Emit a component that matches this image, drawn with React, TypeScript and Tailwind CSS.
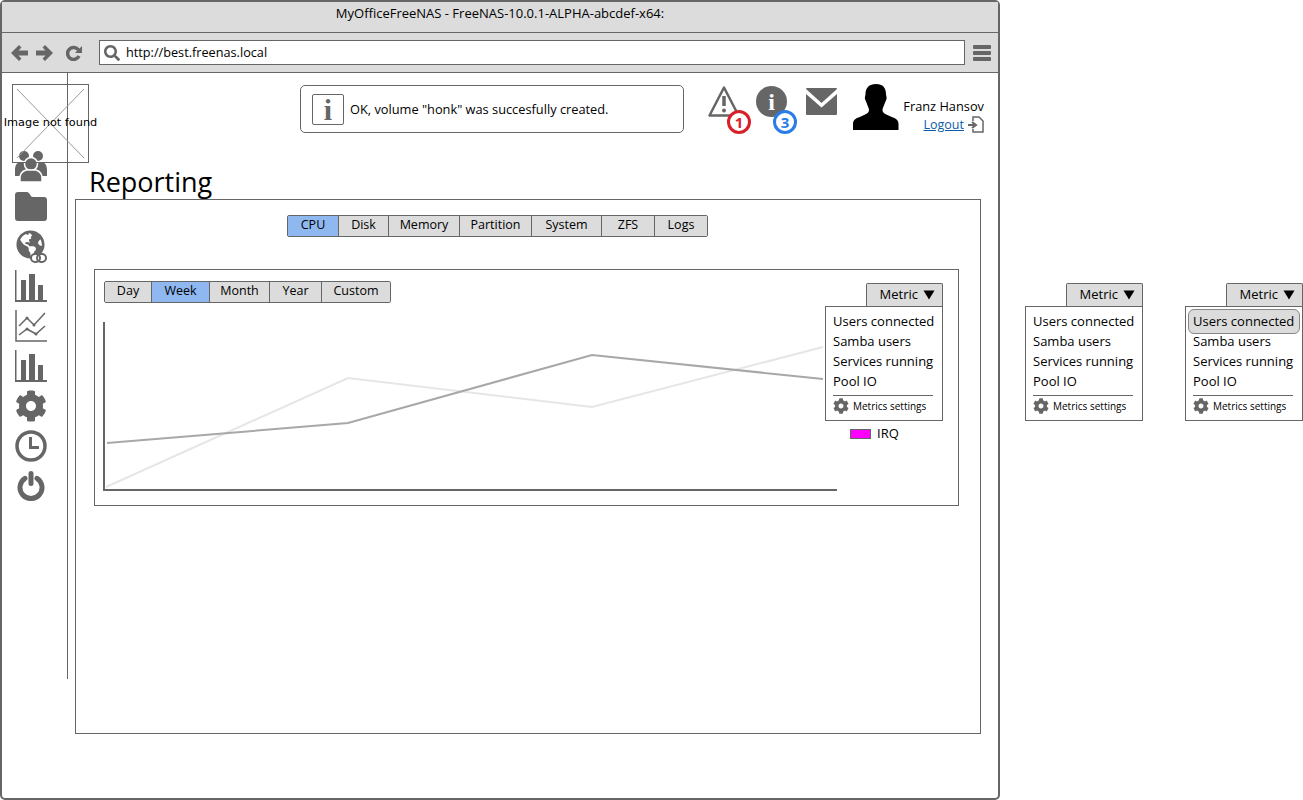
import { FaCog, FaGlobeAmericas, FaSearch } from 'react-icons/fa';

const MAIN_TABS = [
  { label: 'CPU', width: 'w-[50px]', active: true },
  { label: 'Disk', width: 'w-[50px]' },
  { label: 'Memory', width: 'w-[71px]' },
  { label: 'Partition', width: 'w-[72px]' },
  { label: 'System', width: 'w-[70px]' },
  { label: 'ZFS', width: 'w-[53px]' },
  { label: 'Logs', width: 'w-[53px]' },
];

const RANGE_TABS = [
  { label: 'Day', width: 'w-[46px]' },
  { label: 'Week', width: 'w-[58px]', active: true },
  { label: 'Month', width: 'w-[60px]' },
  { label: 'Year', width: 'w-[52px]' },
  { label: 'Custom', width: 'w-[69px]' },
];

const METRICS = ['Users connected', 'Samba users', 'Services running', 'Pool IO'];

function Tabs({ items }: { items: { label: string; width: string; active?: boolean }[] }) {
  return (
    <div className="flex h-[22px] w-fit rounded-[2px] border border-[#666]">
      {items.map((t, i) => (
        <div
          key={t.label}
          className={`flex items-center justify-center pb-px text-[12.5px] text-black ${t.width} ${i > 0 ? 'border-l border-[#666]' : ''} ${
            t.active ? 'bg-[#8fb8f0]' : 'bg-[#dcdcdc]'
          }`}
        >
          {t.label}
        </div>
      ))}
    </div>
  );
}

function MetricDropdown({ highlight }: { highlight?: boolean }) {
  return (
    <div className="flex w-[118px] flex-col items-end">
      <div className="flex h-[23px] w-[77px] items-center justify-end gap-[5px] rounded-t-[2px] border border-b-0 border-[#666] bg-[#dcdcdc] pr-[7px] text-[13px] text-black">
        Metric
        <svg width="12" height="10" viewBox="0 0 12 10">
          <path d="M0.5 0.5h11L6 9.5z" fill="#000" />
        </svg>
      </div>
      <div className="h-[115px] w-[118px] border border-[#666] bg-white pt-[5px] pr-[9px] pl-[7px]">
        {METRICS.map((m, i) => (
          <div key={m} className="relative flex h-[20px] items-center text-[13px] whitespace-nowrap text-black">
            {highlight && i === 0 && (
              <span className="absolute top-[-3px] right-[-7px] left-[-5px] h-[25px] rounded-[6px] border border-[#888] bg-[#dcdcdc]" />
            )}
            <span className="relative">{m}</span>
          </div>
        ))}
        <div className="mt-[3px] flex items-center gap-[4px] border-t border-[#666] pt-[2px] text-[10px] whitespace-nowrap text-black">
          <FaCog size={16} color="#666" />
          Metrics settings
        </div>
      </div>
    </div>
  );
}

function ArrowIcon({ flip }: { flip?: boolean }) {
  return (
    <svg className={flip ? 'rotate-180' : ''} width="17" height="16" viewBox="0 0 17 16" fill="#666">
      <path d="M0 8l8-8 2.500 2.500L7.500 5.500H17v5H7.500l3 3L8 16z" />
    </svg>
  );
}

function ReloadIcon() {
  return (
    <svg width="16" height="16" viewBox="0 0 16 16" fill="none" stroke="#666" strokeWidth="3.500">
      <path d="M13 11a6 6 0 1 1-.5-6" />
      <path d="M16 1v7h-7z" fill="#666" stroke="none" />
    </svg>
  );
}

function MenuIcon() {
  return (
    <svg width="18" height="16" viewBox="0 0 18 16" fill="#666">
      <rect width="18" height="4" rx="1" />
      <rect y="6" width="18" height="4" rx="1" />
      <rect y="12" width="18" height="4" rx="1" />
    </svg>
  );
}

function UsersIcon() {
  return (
    <svg width="32" height="32" viewBox="0 0 32 32" fill="#666">
      <circle cx="9" cy="6" r="5" />
      <circle cx="23" cy="6" r="5" />
      <path d="M0 26v-6c0-6 3-8 6-8h5v14zM32 26v-6c0-6-3-8-6-8h-5v14z" />
      <circle cx="16" cy="14" r="6.500" stroke="#fff" strokeWidth="1.500" />
      <path d="M5 32v-4c0-5 3-7 6-8h10c3 1 6 3 6 8v4z" stroke="#fff" strokeWidth="1.500" />
    </svg>
  );
}

function FolderIcon() {
  return (
    <svg width="32" height="29" viewBox="0 0 32 29" fill="#666">
      <path d="M0 3q0-3 3-3h9q2 0 3 2.500t3 2.500h11q3 0 3 3v18q0 3-3 3H3q-3 0-3-3z" />
    </svg>
  );
}

function GlobeLinkIcon() {
  return (
    <div className="relative h-[33px] w-[31px]">
      <FaGlobeAmericas size={29} color="#666" />
      <svg className="absolute right-0 bottom-0" width="17" height="10" viewBox="0 0 17 10" fill="none" stroke="#666" strokeWidth="2">
        <rect x="1" y="1" width="9" height="8" rx="4" fill="#fff" />
        <rect x="7" y="1" width="9" height="8" rx="4" />
      </svg>
    </div>
  );
}

function BarsIcon({ heights }: { heights: number[] }) {
  return (
    <svg width="32" height="32" viewBox="0 0 32 32" fill="#666">
      <path d="M0 0h1.500v30H32v2H0z" />
      <rect x="6" y={30 - heights[0]} width="5" height={heights[0]} />
      <rect x="14" y={30 - heights[1]} width="6" height={heights[1]} />
      <rect x="23" y={30 - heights[2]} width="5" height={heights[2]} />
    </svg>
  );
}

function LineChartIcon() {
  return (
    <svg width="32" height="32" viewBox="0 0 32 32" fill="none" stroke="#666">
      <path d="M1 0v31h31" strokeWidth="1.500" />
      <path d="M4 16l8-8 7 7 11-12" strokeWidth="1.500" />
      <path d="M4 25l8-6 9 5 9-8" strokeWidth="1.500" />
      <g fill="#666" stroke="none">
        <circle cx="12" cy="8" r="1.500" />
        <circle cx="19" cy="15" r="1.500" />
        <circle cx="12" cy="19" r="1.500" />
        <circle cx="21" cy="24" r="1.500" />
      </g>
    </svg>
  );
}

function ClockIcon() {
  return (
    <svg width="32" height="32" viewBox="0 0 32 32" fill="none" stroke="#666">
      <circle cx="16" cy="16" r="14" strokeWidth="3.500" />
      <path d="M15.500 7v10.500H24" strokeWidth="3" />
    </svg>
  );
}

function PowerIcon() {
  return (
    <svg width="28" height="30" viewBox="0 0 28 30" fill="none" stroke="#666" strokeLinecap="round">
      <path d="M8 7.300a11 11 0 1 0 12 0" strokeWidth="5" />
      <path d="M14 2.500v10" strokeWidth="5" />
    </svg>
  );
}

function Alerts() {
  return (
    <div className="flex items-start">
      <div className="relative mt-[12px] h-[33px] w-[32px]">
        <svg width="32" height="33" viewBox="0 0 32 33" fill="none" stroke="#666">
          <path d="M16 2.500L1.500 30.500h29z" strokeWidth="2.500" strokeLinejoin="round" />
          <path d="M16 11v10" strokeWidth="3.500" />
          <circle cx="16" cy="25.500" r="2" fill="#666" stroke="none" />
        </svg>
        <span className="absolute top-[25px] left-[19px] flex h-[24px] w-[24px] items-center justify-center rounded-full border-[3px] border-[#d9202a] bg-white text-[15px] leading-none font-bold text-[#d9202a]">
          1
        </span>
      </div>
      <div className="relative mt-[13px] ml-[16px] h-[31px] w-[31px] rounded-full bg-[#666]">
        <span className="flex h-full items-center justify-center font-['Liberation_Serif',serif] text-[24px] leading-none font-bold text-white">
          i
        </span>
        <span className="absolute top-[24px] left-[17px] flex h-[24px] w-[24px] items-center justify-center rounded-full border-[3px] border-[#2a7de8] bg-white text-[15px] leading-none font-bold text-[#2a7de8]">
          3
        </span>
      </div>
      <svg className="mt-[15px] ml-[19px]" width="31" height="27" viewBox="0 0 31 27" fill="#666">
        <path d="M0 1q0-1 1-1h29q1 0 1 1L15.500 15z" />
        <path d="M0 6l15.500 13.500L31 6v20q0 1-1 1H1q-1 0-1-1z" />
      </svg>
    </div>
  );
}

function UserBlock() {
  return (
    <div className="ml-[16px] flex items-start">
      <svg className="mt-[11px]" width="46" height="46" viewBox="0 0 46 46" fill="#000">
        <path d="M23 0c7 0 10 4 10 10 0 2 1 3 .5 5-.5 2-1.500 3-2 5-.5 2-2 4-2 6 0 3 3 4 7 6 5 2 9 3 9 8v6H0v-6c0-5 4-6 9-8 4-2 7-3 7-6 0-2-1.500-4-2-6-.5-2-1.500-3-2-5-.5-2 .5-3 .5-5C12.500 4 16 0 23 0z" />
      </svg>
      <div className="mt-[25px] ml-[4px] flex w-[81px] flex-col items-end">
        <div className="text-[12.8px] leading-[17px] whitespace-nowrap text-black">Franz Hansov</div>
        <div className="mt-[1px] flex items-center gap-[4px]">
          <a className="text-[12.5px] leading-[16px] text-[#0a5ca8] underline">Logout</a>
          <svg width="16" height="17" viewBox="0 0 16 17" fill="none" stroke="#666" strokeWidth="1.500">
            <path d="M5 5V1h6l4 4v11H5v-3" />
            <path d="M0 9h6M4 6l4 3-4 3" strokeWidth="2" />
          </svg>
        </div>
      </div>
    </div>
  );
}

export default function App() {
  return (
    <div className="flex h-[800px] w-[1303px] items-start overflow-hidden bg-white font-['Open_Sans',sans-serif]">
      {/* browser window */}
      <div className="relative h-[800px] w-[1000px] shrink-0 rounded-[5px] border-2 border-[#666] bg-white">
        <div className="flex h-[31px] justify-center border-b border-[#666] bg-[#dcdcdc] pt-[3px] text-[13px] leading-[17px] text-black">
          MyOfficeFreeNAS - FreeNAS-10.0.1-ALPHA-abcdef-x64:
        </div>
        <div className="flex h-[40px] items-center border-b border-[#666] bg-[#dcdcdc] pl-[9px]">
          <ArrowIcon />
          <div className="ml-[8px]">
            <ArrowIcon flip />
          </div>
          <div className="ml-[13px]">
            <ReloadIcon />
          </div>
          <div className="ml-[17px] flex h-[25px] w-[866px] items-center border border-[#666] bg-white pl-[4px] text-[12.7px] text-black">
            <FaSearch size={16} color="#666" />
            <span className="ml-[6px]">http://best.freenas.local</span>
          </div>
          <div className="ml-[8px]">
            <MenuIcon />
          </div>
        </div>

        <div className="flex">
          {/* sidebar */}
          <div className="flex h-[606px] w-[66px] shrink-0 flex-col items-start border-r border-[#666] pt-[73px] pl-[13px]">
            {[
              <UsersIcon key="users" />,
              <FolderIcon key="folder" />,
              <GlobeLinkIcon key="globe" />,
              <BarsIcon key="bars1" heights={[20, 26, 15]} />,
              <LineChartIcon key="line" />,
              <BarsIcon key="bars2" heights={[20, 26, 15]} />,
              <FaCog key="cog" size={32} color="#666" />,
              <ClockIcon key="clock" />,
              <PowerIcon key="power" />,
            ].map((icon) => (
              <div key={icon.key} className="flex h-[40px] w-[32px] items-center justify-center">
                {icon}
              </div>
            ))}
          </div>

          {/* main */}
          <div className="min-w-0 flex-1">
            <div className="flex h-[93px] items-start pl-[232px]">
              <div className="mt-[12px] flex h-[48px] w-[384px] items-center rounded-[5px] border border-[#666] pl-[11px] text-[12.8px] text-black">
                <div className="flex h-[31px] w-[32px] items-center justify-center rounded-[2px] border border-[#666] font-['Liberation_Serif',serif] text-[30px] font-bold text-[#666]">
                  i
                </div>
                <span className="mt-[1px] ml-[6px]">OK, volume "honk" was succesfully created.</span>
              </div>
              <div className="ml-[24px] flex items-start">
                <Alerts />
                <UserBlock />
              </div>
            </div>
            <h1 className="ml-[21px] h-[33px] text-[27px] leading-[32px] text-black">Reporting</h1>
            <div className="ml-[7px] h-[535px] w-[906px] border border-[#666]">
              <div className="mt-[15px] ml-[211px]">
                <Tabs items={MAIN_TABS} />
              </div>
              <div className="mt-[32px] ml-[18px] flex h-[237px] w-[865px] border border-[#666]">
                <div className="ml-[9px] w-[721px] shrink-0 pt-[11px]">
                  <Tabs items={RANGE_TABS} />
                  <svg className="mt-[18px] -ml-px" width="735" height="170" viewBox="0 0 735 170" fill="none">
                    <polyline points="3,166 245,57 489,86 720,26" stroke="#e6e6e6" strokeWidth="2" />
                    <polyline points="4,122 245,102 489,34 720,58" stroke="#a8a8a8" strokeWidth="2" />
                    <polyline points="1,1 1,169 734,169" stroke="#666" strokeWidth="2" />
                  </svg>
                </div>
                <div className="relative z-10 pt-[13px]">
                  <MetricDropdown />
                  <div className="mt-[3px] ml-[25px] flex items-center gap-[6px] text-[13px] text-black">
                    <span className="h-[10px] w-[21px] border border-[#666] bg-[#ff00ff]" />
                    IRQ
                  </div>
                </div>
              </div>
            </div>
          </div>
        </div>

        {/* broken image placeholder sits on top of the sidebar */}
        <div className="absolute top-[82px] left-[10px] flex h-[79px] w-[77px] items-center justify-center border border-[#666]">
          <svg className="absolute inset-0" width="75" height="77" viewBox="0 0 75 77" fill="none" stroke="#999">
            <path d="M4 4l67 69M71 4L4 73" />
          </svg>
          <span className="relative font-['DejaVu_Sans',sans-serif] text-[11.3px] whitespace-nowrap text-black">Image not found</span>
        </div>
      </div>

      {/* dropdown state variants */}
      <div className="mt-[283px] ml-[25px] flex gap-[42px]">
        <MetricDropdown />
        <MetricDropdown highlight />
      </div>
    </div>
  );
}
